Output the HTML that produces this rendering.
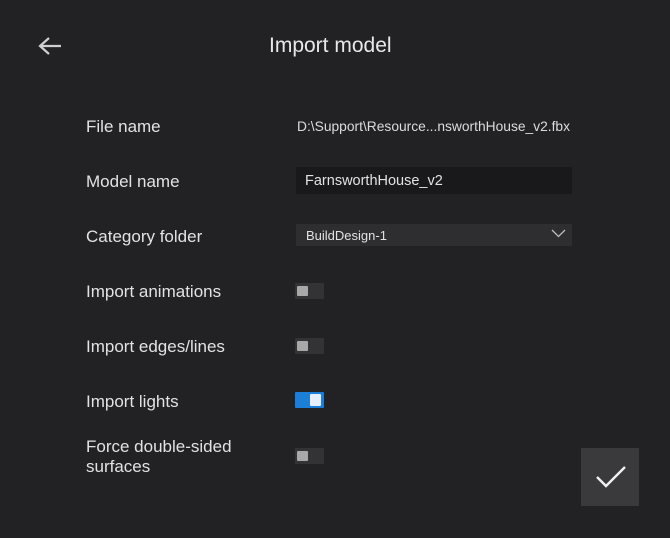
<!DOCTYPE html>
<html><head><style>
body{margin:0;width:670px;height:538px;background:#222224;font-family:"Liberation Sans",sans-serif;color:#e6e6e6;position:relative;overflow:hidden}
.a{position:absolute}
.lbl{position:absolute;left:86px;font-size:17px;color:#e2e2e2}
.tg{position:absolute;left:295px;width:29px;height:16px;background:#333335;border-radius:1px}
.tg i{position:absolute;left:2px;top:3px;width:11px;height:10px;background:#a8a8a8;border-radius:1px}
.tg.on{background:#1b7fd8}
.tg.on i{left:15px;top:2px;width:11px;height:12px;background:#e6eefa}
</style></head><body>
<svg class="a" style="left:38px;top:36px" width="24" height="20" viewBox="0 0 24 20"><path d="M2 10H23M11 2L2 10L11 18" fill="none" stroke="#cfcfcf" stroke-width="2.2"/></svg>
<div class="a" style="left:269px;top:34px;font-size:21px;color:#e8e8e8">Import model</div>
<div class="lbl" style="top:117px">File name</div>
<div class="a" style="left:297px;top:119px;font-size:13.8px;color:#dcdcdc">D:\Support\Resource...nsworthHouse_v2.fbx</div>
<div class="lbl" style="top:172px">Model name</div>
<div class="a" style="left:296px;top:167px;width:276px;height:27px;background:#19191b"></div>
<div class="a" style="left:305px;top:173px;font-size:14.5px;color:#e2e2e2">FarnsworthHouse_v2</div>
<div class="lbl" style="top:227px">Category folder</div>
<div class="a" style="left:296px;top:224px;width:276px;height:22px;background:#2e2e30"></div>
<div class="a" style="left:306px;top:228px;font-size:13px;color:#e2e2e2">BuildDesign-1</div>
<svg class="a" style="left:551px;top:229px" width="15" height="9" viewBox="0 0 15 9"><path d="M1 1L7.5 7.5L14 1" fill="none" stroke="#bdbdbd" stroke-width="1.3"/></svg>
<div class="lbl" style="top:282px">Import animations</div>
<div class="tg" style="top:283px"><i></i></div>
<div class="lbl" style="top:337px">Import edges/lines</div>
<div class="tg" style="top:338px"><i></i></div>
<div class="lbl" style="top:392px">Import lights</div>
<div class="tg on" style="top:392px"><i></i></div>
<div class="lbl" style="top:437px;line-height:20px">Force double-sided<br>surfaces</div>
<div class="tg" style="top:448px"><i></i></div>
<div class="a" style="left:581px;top:448px;width:58px;height:58px;background:#3a3a3c"></div>
<svg class="a" style="left:595px;top:464px" width="32" height="26" viewBox="0 0 32 26"><path d="M2 13L11 22L30 3" fill="none" stroke="#f0f0f0" stroke-width="2.4"/></svg>
</body></html>
